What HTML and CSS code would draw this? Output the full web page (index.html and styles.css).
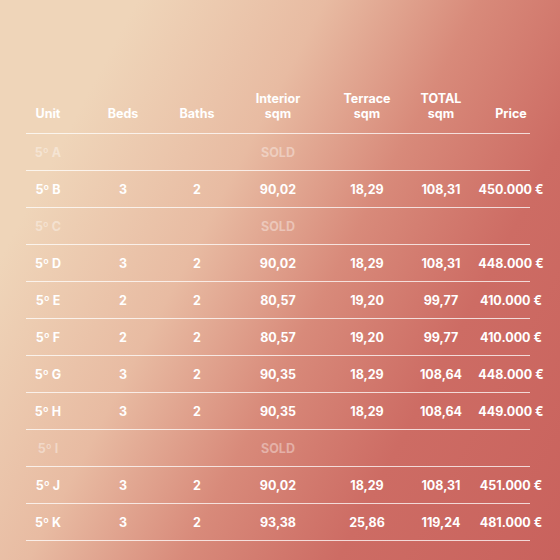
FILE: index.html
```html
<!DOCTYPE html>
<html lang="es">
<head>
<meta charset="utf-8">
<title>Units</title>
<link rel="stylesheet" href="styles.css">
</head>
<body>
<div class="page">
  <div class="table">
    <div class="row head">
      <div class="cell">Unit</div>
      <div class="cell">Beds</div>
      <div class="cell">Baths</div>
      <div class="cell">Interior<br>sqm</div>
      <div class="cell">Terrace<br>sqm</div>
      <div class="cell">TOTAL<br>sqm</div>
      <div class="cell">Price</div>
    </div>
    <div class="row sold">
      <div class="cell">5º A</div><div class="cell"></div><div class="cell"></div>
      <div class="cell">SOLD</div><div class="cell"></div><div class="cell"></div><div class="cell"></div>
    </div>
    <div class="row">
      <div class="cell">5º B</div><div class="cell">3</div><div class="cell">2</div>
      <div class="cell">90,02</div><div class="cell">18,29</div><div class="cell">108,31</div><div class="cell">450.000 €</div>
    </div>
    <div class="row sold">
      <div class="cell">5º C</div><div class="cell"></div><div class="cell"></div>
      <div class="cell">SOLD</div><div class="cell"></div><div class="cell"></div><div class="cell"></div>
    </div>
    <div class="row">
      <div class="cell">5º D</div><div class="cell">3</div><div class="cell">2</div>
      <div class="cell">90,02</div><div class="cell">18,29</div><div class="cell">108,31</div><div class="cell">448.000 €</div>
    </div>
    <div class="row">
      <div class="cell">5º E</div><div class="cell">2</div><div class="cell">2</div>
      <div class="cell">80,57</div><div class="cell">19,20</div><div class="cell">99,77</div><div class="cell">410.000 €</div>
    </div>
    <div class="row">
      <div class="cell">5º F</div><div class="cell">2</div><div class="cell">2</div>
      <div class="cell">80,57</div><div class="cell">19,20</div><div class="cell">99,77</div><div class="cell">410.000 €</div>
    </div>
    <div class="row">
      <div class="cell">5º G</div><div class="cell">3</div><div class="cell">2</div>
      <div class="cell">90,35</div><div class="cell">18,29</div><div class="cell">108,64</div><div class="cell">448.000 €</div>
    </div>
    <div class="row">
      <div class="cell">5º H</div><div class="cell">3</div><div class="cell">2</div>
      <div class="cell">90,35</div><div class="cell">18,29</div><div class="cell">108,64</div><div class="cell">449.000 €</div>
    </div>
    <div class="row sold">
      <div class="cell">5º I</div><div class="cell"></div><div class="cell"></div>
      <div class="cell">SOLD</div><div class="cell"></div><div class="cell"></div><div class="cell"></div>
    </div>
    <div class="row">
      <div class="cell">5º J</div><div class="cell">3</div><div class="cell">2</div>
      <div class="cell">90,02</div><div class="cell">18,29</div><div class="cell">108,31</div><div class="cell">451.000 €</div>
    </div>
    <div class="row">
      <div class="cell">5º K</div><div class="cell">3</div><div class="cell">2</div>
      <div class="cell">93,38</div><div class="cell">25,86</div><div class="cell">119,24</div><div class="cell">481.000 €</div>
    </div>
  </div>
</div>
</body>
</html>
```
FILE: styles.css
```css
html, body {
  margin: 0;
  padding: 0;
}
body {
  width: 560px;
  height: 560px;
  overflow: hidden;
  background: linear-gradient(118deg, #efd5b9 16%, #e8bba2 38%, #d88a7a 56%, #cd6c64 74%, #c9625d 100%);
  font-family: Inter, "Liberation Sans", sans-serif;
  font-weight: 700;
  font-size: 12.5px;
  color: #ffffff;
}
.page {
  padding: 89px 0 0 26px;
}
.table {
  width: 504px;
}
.row {
  display: grid;
  grid-template-columns: 60px 74px 74px 88px 90px 58px 82px;
  height: 37px;
  box-sizing: border-box;
  border-bottom: 1px solid rgba(255, 255, 255, 0.75);
  align-items: center;
}
.row.head {
  height: 45px;
  align-items: end;
  padding-bottom: 12px;
  line-height: 15px;
}
.cell {
  display: flex;
  justify-content: center;
  text-align: center;
  white-space: nowrap;
}
.cell:first-child {
  padding-right: 16px;
}
.row.sold {
  color: rgba(255, 255, 255, 0.38);
}
```
